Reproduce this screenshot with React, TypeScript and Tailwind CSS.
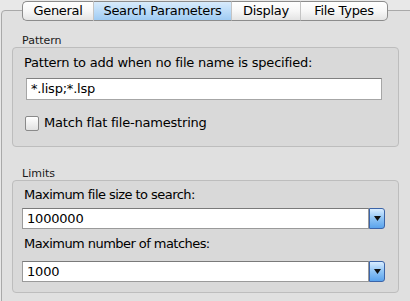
import React from "react";

const font = { fontFamily: '"DejaVu Sans", "Liberation Sans", Arial, sans-serif' };

function Tab({ label, w, selected, first, last }: { label: string; w: string; selected?: boolean; first?: boolean; last?: boolean }) {
  return (
    <div
      className={
        "flex items-center justify-center h-[20px] text-[13px] tracking-[-0.3px] text-black border-y border-[#8c8c8c] " +
        w +
        (first ? " border-l rounded-l-[5px]" : "") +
        (last ? " border-r rounded-r-[5px]" : " border-r border-r-[#c4c4c4]") +
        (selected
          ? " bg-gradient-to-b from-[#d8ebfc] via-[#bcdcf8] to-[#9fcbf3]"
          : " bg-gradient-to-b from-[#ffffff] via-[#f7f7f7] to-[#e4e4e4]")
      }
    >
      {label}
    </div>
  );
}

function SelectBox({ value }: { value: string }) {
  return (
    <div className="flex h-[21px] w-[363px] ml-[9px]">
      <div className="flex-1 bg-white border border-[#9a9a9a] border-t-[#7a7a7a] flex items-center pl-[4px] text-[13px] tracking-[-0.2px] text-black">
        {value}
      </div>
      <div className="w-[16px] h-[21px] rounded-r-[3px] border border-[#3b64a8] bg-gradient-to-b from-[#d9edff] via-[#8ec4f5] to-[#5aa3ec] flex items-center justify-center">
        <svg width="7" height="5" viewBox="0 0 7 5">
          <path d="M0 0 H7 L3.5 5 Z" fill="#111" />
        </svg>
      </div>
    </div>
  );
}

export default function App() {
  return (
    <div className="w-[410px] h-[301px] bg-[#e8e8e8] overflow-hidden" style={font}>
      <div className="relative z-10 flex ml-[22px] pt-[1px]">
        <Tab label="General" w="w-[72px]" first />
        <Tab label="Search Parameters" w="w-[138px]" selected />
        <Tab label="Display" w="w-[69px]" />
        <Tab label="File Types" w="w-[87px]" last />
      </div>
      <div className="-mt-[11px] ml-[1px] w-[420px] h-[300px] border border-[#a9a9a9] rounded-[4px] bg-[#e0e0e0] pl-[10px]">
        <div className="pt-[23px] pl-[10px] text-[11px] leading-[13px] text-[#1a1a1a]">Pattern</div>
        <div className="w-[387px] h-[100px] border border-[#bdbdbd] rounded-[4px] bg-[#d9d9d9] pt-[7px]">
          <div className="pl-[11px] text-[13px] leading-[16px] text-black tracking-[-0.22px]">Pattern to add when no file name is specified:</div>
          <div className="mt-[7px] ml-[13px] w-[356px] h-[22px] bg-white border border-[#a6a6a6] border-t-[#808080] flex items-center pl-[4px] text-[13px] tracking-[-0.2px] text-black">
            *.lisp;*.lsp
          </div>
          <div className="mt-[15px] ml-[12px] flex items-center h-[16px] gap-[5px]">
            <div className="w-[14px] h-[15px] rounded-[2px] border border-[#8a8a8a] bg-gradient-to-b from-[#ffffff] to-[#e2e2e2]" />
            <span className="text-[13px] leading-[16px] tracking-[-0.2px] text-black">Match flat file-namestring</span>
          </div>
        </div>
        <div className="pt-[20px] pl-[10px] text-[11px] leading-[13px] text-[#1a1a1a]">Limits</div>
        <div className="w-[387px] h-[113px] border border-[#bdbdbd] rounded-[4px] bg-[#d9d9d9] pt-[6px]">
          <div className="pl-[11px] text-[13px] leading-[16px] tracking-[-0.55px] text-black">Maximum file size to search:</div>
          <div className="mt-[5px]">
            <SelectBox value="1000000" />
          </div>
          <div className="mt-[7px] pl-[11px] text-[13px] leading-[16px] tracking-[-0.55px] text-black">Maximum number of matches:</div>
          <div className="mt-[9px]">
            <SelectBox value="1000" />
          </div>
        </div>
      </div>
    </div>
  );
}
